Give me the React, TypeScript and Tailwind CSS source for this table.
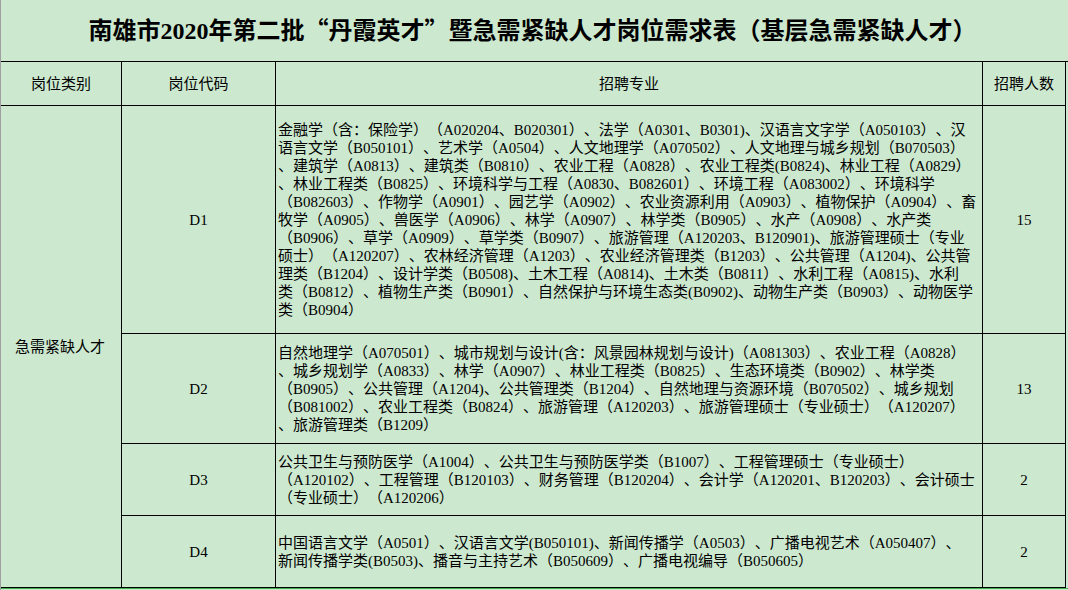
import type { ReactNode } from 'react';

const FONT = "font-['Liberation_Serif','Noto_Sans_CJK_SC',serif]";

const rows: { code: string; count: string; lines: string[] }[] = [
  {
    code: 'D1',
    count: '15',
    lines: [
      '金融学（含：保险学）（A020204、B020301）、法学（A0301、B0301)、汉语言文字学（A050103）、汉',
      '语言文学（B050101）、艺术学（A0504）、人文地理学（A070502）、人文地理与城乡规划（B070503）',
      '、建筑学（A0813）、建筑类（B0810）、农业工程（A0828）、农业工程类(B0824)、林业工程（A0829）',
      '、林业工程类（B0825）、环境科学与工程（A0830、B082601）、环境工程（A083002）、环境科学',
      '（B082603）、作物学（A0901）、园艺学（A0902）、农业资源利用（A0903）、植物保护（A0904）、畜',
      '牧学（A0905）、兽医学（A0906）、林学（A0907）、林学类（B0905）、水产（A0908）、水产类',
      '（B0906）、草学（A0909）、草学类（B0907）、旅游管理（A120203、B120901)、旅游管理硕士（专业',
      '硕士）（A120207）、农林经济管理（A1203）、农业经济管理类（B1203）、公共管理（A1204)、公共管',
      '理类（B1204）、设计学类（B0508)、土木工程（A0814)、土木类（B0811）、水利工程（A0815)、水利',
      '类（B0812）、植物生产类（B0901）、自然保护与环境生态类(B0902)、动物生产类（B0903）、动物医学',
      '类（B0904）',
    ],
  },
  {
    code: 'D2',
    count: '13',
    lines: [
      '自然地理学（A070501）、城市规划与设计(含：风景园林规划与设计)（A081303）、农业工程（A0828）',
      '、城乡规划学（A0833）、林学（A0907）、林业工程类（B0825）、生态环境类（B0902）、林学类',
      '（B0905）、公共管理（A1204)、公共管理类（B1204）、自然地理与资源环境（B070502）、城乡规划',
      '（B081002）、农业工程类（B0824）、旅游管理（A120203）、旅游管理硕士（专业硕士）（A120207）',
      '、旅游管理类（B1209）',
    ],
  },
  {
    code: 'D3',
    count: '2',
    lines: [
      '公共卫生与预防医学（A1004）、公共卫生与预防医学类（B1007）、工程管理硕士（专业硕士）',
      '（A120102）、工程管理（B120103）、财务管理（B120204）、会计学（A120201、B120203）、会计硕士',
      '（专业硕士）（A120206）',
    ],
  },
  {
    code: 'D4',
    count: '2',
    lines: [
      '中国语言文学（A0501）、汉语言文学(B050101)、新闻传播学（A0503）、广播电视艺术（A050407）、',
      '新闻传播学类(B0503)、播音与主持艺术（B050609）、广播电视编导（B050605）',
    ],
  },
];

const rowStart = ['row-start-2', 'row-start-3', 'row-start-4', 'row-start-5'];

function Cell({ children, className = '' }: { children?: ReactNode; className?: string }) {
  return (
    <div className={`border-r border-b border-black flex items-center justify-center overflow-hidden ${className}`}>
      {children}
    </div>
  );
}

export default function App() {
  return (
    <div
      className={`w-[1068px] h-[590px] bg-[#cce8cf] border-l border-[#a0a0a0] text-black overflow-hidden [text-spacing-trim:space-all] ${FONT}`}
    >
      {/* Title */}
      <div className="h-[61px] flex items-center justify-center pb-[2px] pr-[4px]">
        <h1 className="text-[24px] leading-none font-bold">
          南雄市2020年第二批<span className="font-['Noto_Sans_CJK_SC',sans-serif]">“</span>丹霞英才
          <span className="font-['Noto_Sans_CJK_SC',sans-serif]">”</span>暨急需紧缺人才岗位需求表（基层急需紧缺人才）
        </h1>
      </div>

      {/* Table */}
      <div className="grid grid-cols-[121px_154px_707px_83px] grid-rows-[44px_228px_110px_72px_72px] border-t border-black text-[15px] leading-[18px]">
        <Cell>岗位类别</Cell>
        <Cell>岗位代码</Cell>
        <Cell>招聘专业</Cell>
        <Cell>招聘人数</Cell>

        <Cell className="col-start-1 row-start-2 row-span-4 pr-[2px]">急需紧缺人才</Cell>

        {rows.map((r, i) => (
          <div key={r.code} className="contents">
            <Cell className={`col-start-2 ${rowStart[i]}`}>{r.code}</Cell>
            <Cell className={`col-start-3 justify-start pl-[2px] ${rowStart[i]}`}>
              <div className="w-full">
                {r.lines.map((l, j) => (
                  <div key={j} className="whitespace-nowrap">
                    {l}
                  </div>
                ))}
              </div>
            </Cell>
            <Cell className={`col-start-4 ${rowStart[i]}`}>{r.count}</Cell>
          </div>
        ))}
      </div>
      <div className="h-[1px] bg-[#3fae49]" />
    </div>
  );
}
